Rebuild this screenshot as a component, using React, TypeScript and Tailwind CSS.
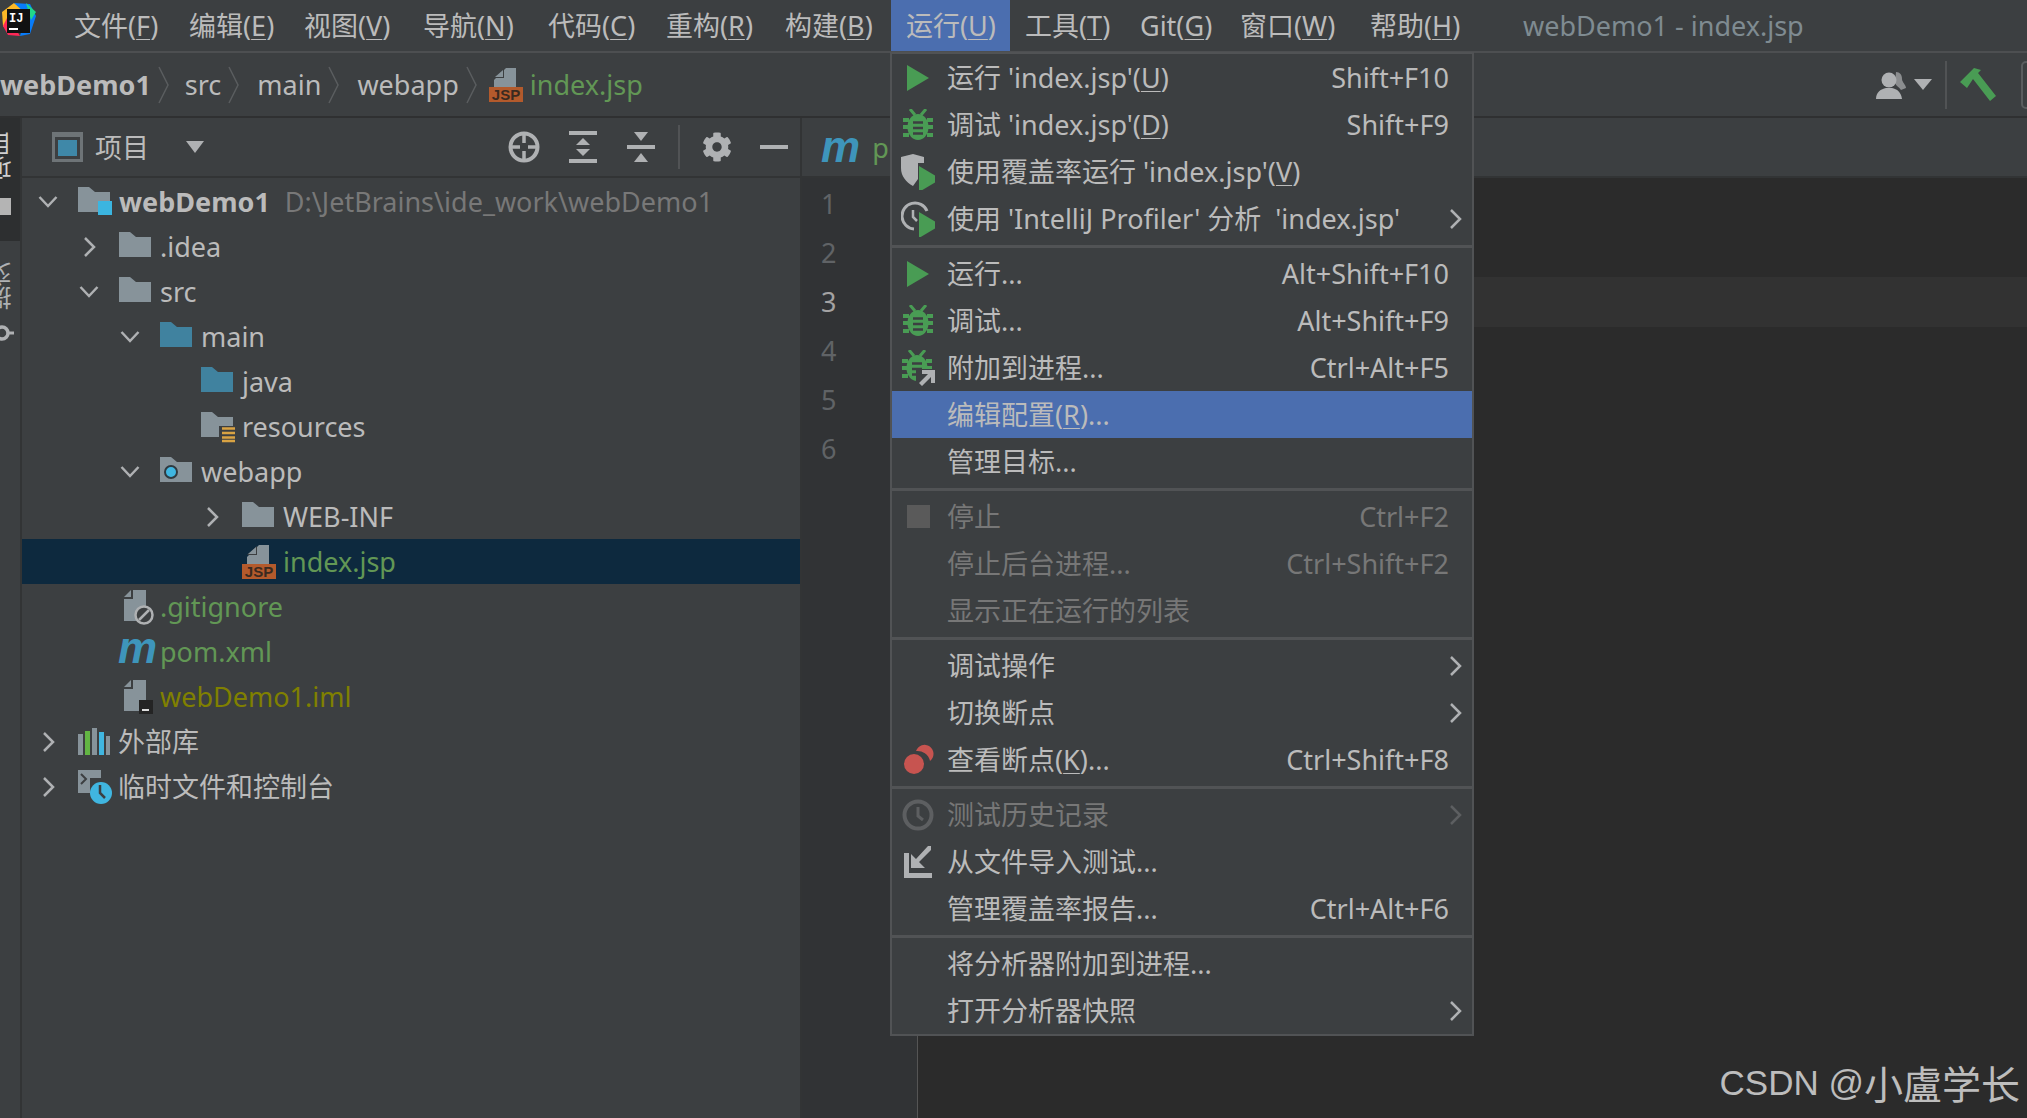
import { ReactNode } from 'react';
import { FaCog } from 'react-icons/fa';

type MenuRowProps = {
  label: ReactNode;
  icon?: ReactNode;
  shortcut?: string;
  arrow?: boolean;
  disabled?: boolean;
  active?: boolean;
};

type TreeRowProps = {
  indent: string;
  open?: boolean;
  closed?: boolean;
  icon: ReactNode;
  selected?: boolean;
  children: ReactNode;
};

const GREEN = '#499C54';
const GRAY = '#87939A';
const BLUE = '#40829F';

function U({ children }: { children: ReactNode }) {
  return <span className="underline underline-offset-[3px] decoration-1">{children}</span>;
}

function Play({ x = 0, y = 0 }: { x?: number; y?: number }) {
  return <polygon points={`${x},${y} ${x + 22},${y + 13} ${x},${y + 26}`} fill={GREEN} />;
}

function BugShape() {
  return (
    <g>
      <path d="M7 0l5 6M23 0l-5 6" stroke={GREEN} strokeWidth="3" />
      <ellipse cx="15" cy="18" rx="10.5" ry="13" fill={GREEN} />
      <path d="M0 11h6M0 18h6M0 26h6M24 11h6M24 18h6M24 26h6" stroke={GREEN} strokeWidth="4" />
      <path d="M10 13.5h10M10 19h10M10 24.5h10" stroke="#3C3F41" strokeWidth="2.5" />
    </g>
  );
}

function PlayIcon() {
  return (
    <svg width="22" height="26" viewBox="0 0 22 26" className="-ml-[3px]">
      <Play />
    </svg>
  );
}

function BugIcon() {
  return (
    <svg width="30" height="32" viewBox="0 0 30 32" className="-ml-[3px]">
      <BugShape />
    </svg>
  );
}

function CoverageIcon() {
  return (
    <svg width="34" height="36" viewBox="0 0 34 36" className="-ml-[3px]">
      <path d="M12 0l11 3v6h-6v16l-5 7C5 28 0 22 0 14V3z" fill="#AFB1B3" />
      <Play x={18} y={12} />
    </svg>
  );
}

function ProfilerIcon() {
  return (
    <svg width="34" height="36" viewBox="0 0 34 36" className="-ml-[3px]">
      <path d="M26 10A13 13 0 1 0 13 28" fill="none" stroke="#AFB1B3" strokeWidth="3" />
      <path d="M12 9v7l4 4" fill="none" stroke="#AFB1B3" strokeWidth="2.5" />
      <Play x={18} y={11} />
    </svg>
  );
}

function AttachIcon() {
  return (
    <svg width="34" height="36" viewBox="0 0 34 36" className="-ml-[2px]">
      <BugShape />
      <path d="M14 19h20v17H14z" fill="#3C3F41" />
      <path d="M33 20v13h-4v-6l-9 9-3-3 9-9h-6v-4z" fill="#AFB1B3" />
    </svg>
  );
}

function ClockIcon() {
  return (
    <svg width="32" height="32" viewBox="0 0 32 32" className="-ml-[3px]">
      <circle cx="16" cy="16" r="13.5" fill="none" stroke="#5D5F61" strokeWidth="4" />
      <path d="M16 8v9l5 4" fill="none" stroke="#5D5F61" strokeWidth="3" />
    </svg>
  );
}

function ImportIcon() {
  return (
    <svg width="28" height="32" viewBox="0 0 28 32" className="-ml-[3px]">
      <path d="M0 7h5v20h23v5H0z" fill="#AFB1B3" />
      <path d="M27 0v4L15 16l6 6H7V8l5 5L24 0z" fill="#AFB1B3" />
    </svg>
  );
}

function BreakpointIcon() {
  return (
    <svg width="30" height="34" viewBox="0 0 30 34" className="-ml-[2px]">
      <path d="M12 8a9 9 0 1 1 14 10A13 13 0 0 0 12 8z" fill="#C75450" />
      <circle cx="10" cy="21" r="10" fill="#C75450" />
    </svg>
  );
}

function ChevronRight({ color = '#AFB1B3', className = '' }: { color?: string; className?: string }) {
  return (
    <svg width="13" height="22" viewBox="0 0 13 22" className={className}>
      <path d="M2 2l9 9-9 9" fill="none" stroke={color} strokeWidth="2.5" />
    </svg>
  );
}

function ChevronDown() {
  return (
    <svg width="20" height="13" viewBox="0 0 20 13">
      <path d="M1.5 2l8.5 9 8.5-9" fill="none" stroke="#AFB1B3" strokeWidth="2.5" />
    </svg>
  );
}

function Folder({ color = GRAY, children }: { color?: string; children?: ReactNode }) {
  return (
    <svg width="36" height="30" viewBox="0 0 36 30" className="overflow-visible">
      <path d="M0 0h11l6 5h15v20H0z" fill={color} />
      {children}
    </svg>
  );
}

function FileIcon({ children }: { children?: ReactNode }) {
  return (
    <svg width="34" height="34" viewBox="0 0 34 34" className="overflow-visible">
      <path d="M9 0h13v31H0V9h9z" fill={GRAY} />
      <path d="M7 0v7H0z" fill={GRAY} />
      {children}
    </svg>
  );
}

function JspIcon() {
  return (
    <svg width="34" height="34" viewBox="0 0 34 34">
      <path d="M17 0h10v20H5v-8z" fill={GRAY} />
      <path d="M15 1v9H5z" fill="#3C3F41" />
      <path d="M14 2v7H6z" fill={GRAY} />
      <rect y="19" width="34" height="15" fill="#B35A2C" />
      <text x="17" y="32" textAnchor="middle" fontSize="15" fontWeight="700" fill="#3A2A20" fontFamily="Liberation Sans">JSP</text>
    </svg>
  );
}

function MavenMark() {
  return <span className="font-['Liberation_Sans',sans-serif] text-[44px] leading-none font-bold italic text-[#3E95BB]">m</span>;
}

function Logo() {
  return (
    <svg width="37" height="36" viewBox="0 0 37 36" className="shrink-0">
      <polygon points="2,10 14,1 22,6 8,30 3,24" fill="#FCB827" />
      <polygon points="3,24 8,14 20,34 8,33" fill="#FE2857" />
      <polygon points="14,1 30,2 36,14 30,32 20,34 26,12" fill="#087CFA" />
      <polygon points="26,1 36,10 31,18" fill="#21D789" />
      <rect x="7" y="7" width="23" height="24" fill="#111" />
      <text x="9" y="20" fontSize="12" fontWeight="700" fill="#fff" fontFamily="Liberation Mono">IJ</text>
      <rect x="9" y="26" width="9" height="2" fill="#fff" />
    </svg>
  );
}

function MenuBar() {
  return (
    <div className="flex h-[53px] shrink-0 items-start border-b-2 border-[#4D4F51] text-[#BBBBBB]">
      <div className="mt-[2px] w-[59px] shrink-0">
        <Logo />
      </div>
      <div className="flex h-[51px] w-[115px] items-center pl-[15px]">文件(<U>F</U>)</div>
      <div className="flex h-[51px] w-[115px] items-center pl-[15px]">编辑(<U>E</U>)</div>
      <div className="flex h-[51px] w-[119px] items-center pl-[15px]">视图(<U>V</U>)</div>
      <div className="flex h-[51px] w-[125px] items-center pl-[15px]">导航(<U>N</U>)</div>
      <div className="flex h-[51px] w-[118px] items-center pl-[15px]">代码(<U>C</U>)</div>
      <div className="flex h-[51px] w-[119px] items-center pl-[15px]">重构(<U>R</U>)</div>
      <div className="flex h-[51px] w-[121px] items-center pl-[15px]">构建(<U>B</U>)</div>
      <div className="flex h-[51px] w-[119px] items-center bg-[#4B6EAF] pl-[15px]">运行(<U>U</U>)</div>
      <div className="flex h-[51px] w-[115px] items-center pl-[15px]">工具(<U>T</U>)</div>
      <div className="flex h-[51px] w-[100px] items-center pl-[15px]">Git(<U>G</U>)</div>
      <div className="flex h-[51px] w-[130px] items-center pl-[15px]">窗口(<U>W</U>)</div>
      <div className="flex h-[51px] w-[153px] items-center pl-[15px]">帮助(<U>H</U>)</div>
      <div className="flex h-[51px] items-center pl-[15px] text-[#7F8B91]">webDemo1 - index.jsp</div>
    </div>
  );
}

function Crumb({ children }: { children: ReactNode }) {
  return (
    <>
      <span>{children}</span>
      <svg width="12" height="38" viewBox="0 0 12 38" className="mx-[7px]">
        <path d="M1 1l9 18-9 18" fill="none" stroke="#5A5D5F" strokeWidth="1.5" />
      </svg>
    </>
  );
}

function NavBar() {
  return (
    <div className="flex h-[65px] shrink-0 items-center border-b-2 border-[#2F3031] text-[#BBBBBB]">
      <div className="flex items-center">
        <span className="font-bold">webDemo1</span>
        <svg width="12" height="38" viewBox="0 0 12 38" className="mr-[15px] ml-[7px]">
          <path d="M1 1l9 18-9 18" fill="none" stroke="#5A5D5F" strokeWidth="1.5" />
        </svg>
        <Crumb>src</Crumb>
        <span className="w-[10px]" />
        <Crumb>main</Crumb>
        <span className="w-[10px]" />
        <Crumb>webapp</Crumb>
        <span className="ml-[4px]" />
        <JspIcon />
        <span className="ml-[7px] text-[#629755]">index.jsp</span>
      </div>
      <div className="ml-auto flex items-center">
        <svg width="30" height="28" viewBox="0 0 30 28">
          <path d="M20 1c4 0 6 3 6 7 0 3 4 6 4 9l-5 2c-2-3-5-4-6-7z" fill="#8B8D8F" />
          <circle cx="13" cy="9" r="7.5" fill="#AFB1B3" />
          <path d="M0 28c0-7 5-10 10-11h6c5 1 9 4 10 11z" fill="#AFB1B3" />
        </svg>
        <svg width="18" height="11" viewBox="0 0 18 11" className="ml-[8px]">
          <polygon points="0,0 18,0 9,11" fill="#AFB1B3" />
        </svg>
        <div className="mx-[13px] h-[48px] w-[2px] bg-[#515355]" />
        <svg width="36" height="34" viewBox="0 0 36 34" className="mr-[25px]">
          <path d="M0 14L14 0l7 2-3 3 18 23-6 5L13 11l-6 9z" fill={GREEN} />
        </svg>
        <div className="-mr-[20px] h-[48px] w-[26px] rounded-[5px] border-2 border-[#5A5D5F]" />
      </div>
    </div>
  );
}

function LeftStrip() {
  return (
    <div className="flex w-[22px] shrink-0 flex-col overflow-hidden border-r-2 border-[#323435] text-[#BBBBBB]">
      <div className="flex h-[123px] flex-col bg-[#2D2F30] pt-[14px]">
        <span className="-ml-[11px] rotate-180 text-[24px] leading-[24px] text-[#D0D0D0] [writing-mode:vertical-rl]">项目</span>
        <div className="mt-[18px] h-[17px] w-[11px] bg-[#B4B4B4]" />
      </div>
      <span className="mt-[21px] -ml-[11px] rotate-180 text-[24px] leading-[24px] text-[#AFB1B3] [writing-mode:vertical-rl]">提交</span>
      <svg width="14" height="20" viewBox="0 0 14 20" className="mt-[13px]">
        <circle cx="2" cy="10" r="6" fill="none" stroke="#AFB1B3" strokeWidth="3.5" />
        <path d="M8 10h6" stroke="#AFB1B3" strokeWidth="3" />
      </svg>
    </div>
  );
}

function TreeRow({ indent, open, closed, icon, selected, children }: TreeRowProps) {
  return (
    <div className={`flex h-[45px] items-center ${indent} ${selected ? 'bg-[#0D293E]' : ''}`}>
      <div className="flex w-[40px] shrink-0 justify-center">
        {open && <ChevronDown />}
        {closed && <ChevronRight />}
      </div>
      <div className="ml-[10px] flex h-[36px] w-[41px] shrink-0 items-center">{icon}</div>
      {children}
    </div>
  );
}

function ProjectPane() {
  return (
    <div className="flex w-[780px] shrink-0 flex-col border-r-2 border-[#323435] text-[#BBBBBB]">
      <div className="flex h-[60px] shrink-0 items-center border-b-2 border-[#323435]">
        <svg width="31" height="30" viewBox="0 0 31 30" className="ml-[30px]">
          <rect width="31" height="30" fill="#6E7477" />
          <rect x="3" y="5" width="25" height="22" fill="#3C3F41" />
          <rect x="6" y="8" width="19" height="16" fill="#3F88A8" />
        </svg>
        <span className="ml-[12px]">项目</span>
        <svg width="18" height="12" viewBox="0 0 18 12" className="ml-[37px]">
          <polygon points="0,0 18,0 9,12" fill="#AFB1B3" />
        </svg>
        <svg width="32" height="32" viewBox="0 0 32 32" className="ml-[304px]">
          <circle cx="16" cy="16" r="13.5" fill="none" stroke="#AFB1B3" strokeWidth="4" />
          <path d="M16 3v9M16 20v9M3 16h9M20 16h9" stroke="#AFB1B3" strokeWidth="3.5" />
        </svg>
        <svg width="28" height="32" viewBox="0 0 28 32" className="ml-[29px]">
          <rect width="28" height="4" fill="#AFB1B3" />
          <rect y="28" width="28" height="4" fill="#AFB1B3" />
          <polygon points="14,7 21,14 7,14" fill="#AFB1B3" />
          <polygon points="7,18 21,18 14,25" fill="#AFB1B3" />
        </svg>
        <svg width="28" height="32" viewBox="0 0 28 32" className="ml-[30px]">
          <rect y="14" width="28" height="4" fill="#AFB1B3" />
          <polygon points="7,1 21,1 14,10" fill="#AFB1B3" />
          <polygon points="14,22 21,31 7,31" fill="#AFB1B3" />
        </svg>
        <div className="ml-[23px] h-[44px] w-[2px] bg-[#515355]" />
        <FaCog className="ml-[22px] text-[#AFB1B3]" size={30} />
        <div className="ml-[28px] h-[4px] w-[28px] bg-[#AFB1B3]" />
      </div>
      <div className="flex-1 pt-[1px]">
        <TreeRow indent="pl-[6px]" open icon={<Folder><rect x="20" y="14" width="14" height="14" fill="#3BB5E0" /></Folder>}>
          <span className="font-bold">webDemo1</span>
          <span className="ml-[15px] text-[#787878]">D:\JetBrains\ide_work\webDemo1</span>
        </TreeRow>
        <TreeRow indent="pl-[47px]" closed icon={<Folder />}>.idea</TreeRow>
        <TreeRow indent="pl-[47px]" open icon={<Folder />}>src</TreeRow>
        <TreeRow indent="pl-[88px]" open icon={<Folder color={BLUE} />}>main</TreeRow>
        <TreeRow indent="pl-[129px]" icon={<Folder color={BLUE} />}>java</TreeRow>
        <TreeRow indent="pl-[129px]" icon={
          <Folder>
            <rect x="18" y="14" width="17" height="16" fill="#3C3F41" />
            <path d="M21 16.5h13M21 21h13M21 25.500h13M21 29h13" stroke="#D9A343" strokeWidth="2.4" />
          </Folder>
        }>resources</TreeRow>
        <TreeRow indent="pl-[88px]" open icon={
          <Folder>
            <circle cx="11" cy="15" r="6" fill="#40B6E0" stroke="#2F3A40" strokeWidth="2" />
          </Folder>
        }>
          <span className="-ml-[0px]">webapp</span>
        </TreeRow>
        <TreeRow indent="pl-[170px]" closed icon={<Folder />}>WEB-INF</TreeRow>
        <TreeRow indent="pl-[170px]" selected icon={<JspIcon />}>
          <span className="text-[#629755]">index.jsp</span>
        </TreeRow>
        <TreeRow indent="pl-[47px]" icon={
          <div className="ml-[5px]">
            <FileIcon>
              <circle cx="20" cy="25" r="8.500" fill="#3C3F41" stroke="#AFB1B3" strokeWidth="2.500" />
              <path d="M15 30l10-10" stroke="#AFB1B3" strokeWidth="2.500" />
            </FileIcon>
          </div>
        }>
          <span className="text-[#629755]">.gitignore</span>
        </TreeRow>
        <TreeRow indent="pl-[47px]" icon={<div className="-ml-[1px] -mt-[8px]"><MavenMark /></div>}>
          <span className="text-[#629755]">pom.xml</span>
        </TreeRow>
        <TreeRow indent="pl-[47px]" icon={
          <div className="ml-[5px]">
            <FileIcon>
              <rect x="15" y="20" width="14" height="14" fill="#242424" />
              <rect x="18" y="29" width="7" height="2" fill="#DDDDDD" />
            </FileIcon>
          </div>
        }>
          <span className="text-[#808000]">webDemo1.iml</span>
        </TreeRow>
        <TreeRow indent="pl-[6px]" closed icon={
          <svg width="32" height="28" viewBox="0 0 32 28">
            <rect x="0" y="6" width="5" height="21" fill={GRAY} />
            <rect x="7" y="3" width="5" height="24" fill="#62B543" />
            <rect x="14" y="0" width="5" height="27" fill={GRAY} />
            <rect x="21" y="4" width="5" height="23" fill="#40B6E0" />
            <rect x="28" y="8" width="4" height="19" fill={GRAY} />
          </svg>
        }>
          <span className="-ml-[1px]">外部库</span>
        </TreeRow>
        <TreeRow indent="pl-[6px]" closed icon={
          <svg width="34" height="34" viewBox="0 0 34 34">
            <path d="M0 0h23v8H12v15H0z" fill={GRAY} />
            <path d="M3 4l5 5-5 5" fill="none" stroke="#3C3F41" strokeWidth="2" />
            <circle cx="23" cy="23" r="11" fill="#40B6E0" />
            <path d="M22 15v8l5 5" fill="none" stroke="#3C3F41" strokeWidth="2.500" />
          </svg>
        }>
          <span className="-ml-[1px]">临时文件和控制台</span>
        </TreeRow>
      </div>
    </div>
  );
}

function Editor() {
  return (
    <div className="flex min-w-0 flex-1 flex-col">
      <div className="flex h-[60px] shrink-0 items-center border-b-2 border-[#323435] pl-[19px]">
        <MavenMark />
        <span className="ml-[12px] text-[#629755]">pom.xml</span>
      </div>
      <div className="flex flex-1 bg-[#2B2B2B]">
        <div className="w-[116px] shrink-0 border-r border-[#555555] bg-[#313335] pt-[1px] pl-[19px] text-[#606366]">
          <div className="flex h-[49px] items-center">1</div>
          <div className="flex h-[49px] items-center">2</div>
          <div className="flex h-[49px] items-center text-[#A4A3A3]">3</div>
          <div className="flex h-[49px] items-center">4</div>
          <div className="flex h-[49px] items-center">5</div>
          <div className="flex h-[49px] items-center">6</div>
        </div>
        <div className="flex-1 pt-[99px]">
          <div className="h-[50px] bg-[#323232]" />
        </div>
      </div>
    </div>
  );
}

function MenuRow({ label, icon, shortcut, arrow, disabled, active }: MenuRowProps) {
  const color = disabled ? 'text-[#777777]' : 'text-[#BBBBBB]';
  return (
    <div className={`flex h-[47px] items-center whitespace-pre ${color} ${active ? 'bg-[#4B6EAF]' : ''}`}>
      <div className="flex w-[55px] shrink-0 justify-center">{icon}</div>
      <span>{label}</span>
      {shortcut && <span className="mr-[23px] ml-auto">{shortcut}</span>}
      {arrow && <ChevronRight color={disabled ? '#5D5F61' : '#AFB1B3'} className="mr-[10px] ml-auto" />}
    </div>
  );
}

function MenuSep() {
  return (
    <div className="flex h-[8px] items-center">
      <div className="h-[3px] w-full bg-[#515355]" />
    </div>
  );
}

function RunMenu() {
  return (
    <div className="absolute top-[52px] left-[890px] w-[584px] border-2 border-[#515355] bg-[#3C3F41]">
      <MenuRow icon={<PlayIcon />} label={<>运行 'index.jsp'(<U>U</U>)</>} shortcut="Shift+F10" />
      <MenuRow icon={<BugIcon />} label={<>调试 'index.jsp'(<U>D</U>)</>} shortcut="Shift+F9" />
      <MenuRow icon={<CoverageIcon />} label={<>使用覆盖率运行 'index.jsp'(<U>V</U>)</>} />
      <MenuRow icon={<ProfilerIcon />} label="使用 'IntelliJ Profiler' 分析  'index.jsp'" arrow />
      <MenuSep />
      <MenuRow icon={<PlayIcon />} label="运行..." shortcut="Alt+Shift+F10" />
      <MenuRow icon={<BugIcon />} label="调试..." shortcut="Alt+Shift+F9" />
      <MenuRow icon={<AttachIcon />} label="附加到进程..." shortcut="Ctrl+Alt+F5" />
      <MenuRow active label={<>编辑配置(<U>R</U>)...</>} />
      <MenuRow label="管理目标..." />
      <MenuSep />
      <MenuRow disabled icon={<div className="-ml-[3px] h-[23px] w-[23px] bg-[#5A5A5A]" />} label="停止" shortcut="Ctrl+F2" />
      <MenuRow disabled label="停止后台进程..." shortcut="Ctrl+Shift+F2" />
      <MenuRow disabled label="显示正在运行的列表" />
      <MenuSep />
      <MenuRow label="调试操作" arrow />
      <MenuRow label="切换断点" arrow />
      <MenuRow icon={<BreakpointIcon />} label={<>查看断点(<U>K</U>)...</>} shortcut="Ctrl+Shift+F8" />
      <MenuSep />
      <MenuRow disabled icon={<ClockIcon />} label="测试历史记录" arrow />
      <MenuRow icon={<ImportIcon />} label="从文件导入测试..." />
      <MenuRow label="管理覆盖率报告..." shortcut="Ctrl+Alt+F6" />
      <MenuSep />
      <MenuRow label="将分析器附加到进程..." />
      <MenuRow label="打开分析器快照" arrow />
    </div>
  );
}

export default function App() {
  return (
    <div className="relative flex h-[1118px] w-[2027px] flex-col overflow-hidden bg-[#3C3F41] font-['Noto_Sans','Noto_Sans_CJK_SC',sans-serif] text-[27px] leading-none">
      <MenuBar />
      <NavBar />
      <div className="flex min-h-0 flex-1">
        <LeftStrip />
        <ProjectPane />
        <Editor />
      </div>
      <RunMenu />
      <div className="absolute right-[7px] bottom-[16px] flex items-center whitespace-pre text-[#BDBDBD]">
        <span className="font-['Liberation_Sans',sans-serif] text-[35px]">CSDN @</span>
        <span className="font-['Noto_Sans_CJK_SC',sans-serif] text-[39px]">小盧学长</span>
      </div>
    </div>
  );
}
